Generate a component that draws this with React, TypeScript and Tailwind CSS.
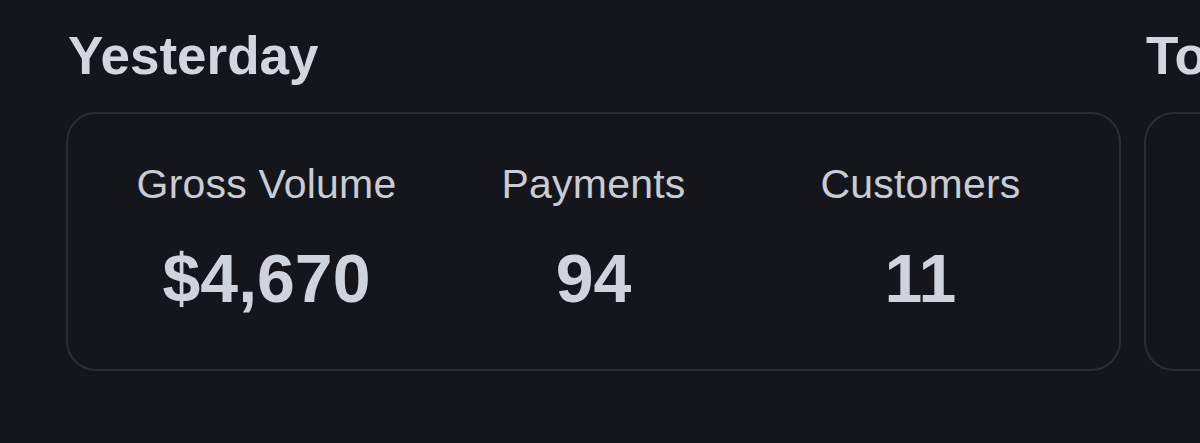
const stats = [
  { label: 'Gross Volume', value: '$4,670' },
  { label: 'Payments', value: '94' },
  { label: 'Customers', value: '11' },
]

function StatCard({ items }: { items: { label: string; value: string }[] }) {
  return (
    <div className="grid w-[1055px] shrink-0 grid-cols-3 rounded-[30px] border-2 border-[#2c2e37] px-[35px] pt-[46px] pb-[57px]">
      {items.map((s) => (
        <div key={s.label} className="flex flex-col items-center">
          <p className="text-[41px] leading-[48px] tracking-[0.2px] text-[#c9ccd4]">{s.label}</p>
          <p className="mt-[36px] text-[68px] leading-none font-bold text-[#cfd3dc]">{s.value}</p>
        </div>
      ))}
    </div>
  )
}

export default function App() {
  return (
    <div
      className="h-[443px] w-[1200px] overflow-hidden bg-[#15161b] pl-[66px]"
      style={{ fontFamily: '"Liberation Sans", Arial, sans-serif' }}
    >
      <div className="flex gap-[23px]">
        <section className="shrink-0">
          <h2 className="mt-[24px] mb-[24px] pl-[2px] text-[53px] leading-[64px] font-bold text-[#d3d6de]">
            Yesterday
          </h2>
          <StatCard items={stats} />
        </section>
        <section className="shrink-0">
          <h2 className="mt-[24px] mb-[24px] pl-[2px] text-[53px] leading-[64px] font-bold text-[#d3d6de]">
            Today
          </h2>
          <StatCard items={stats} />
        </section>
      </div>
    </div>
  )
}
